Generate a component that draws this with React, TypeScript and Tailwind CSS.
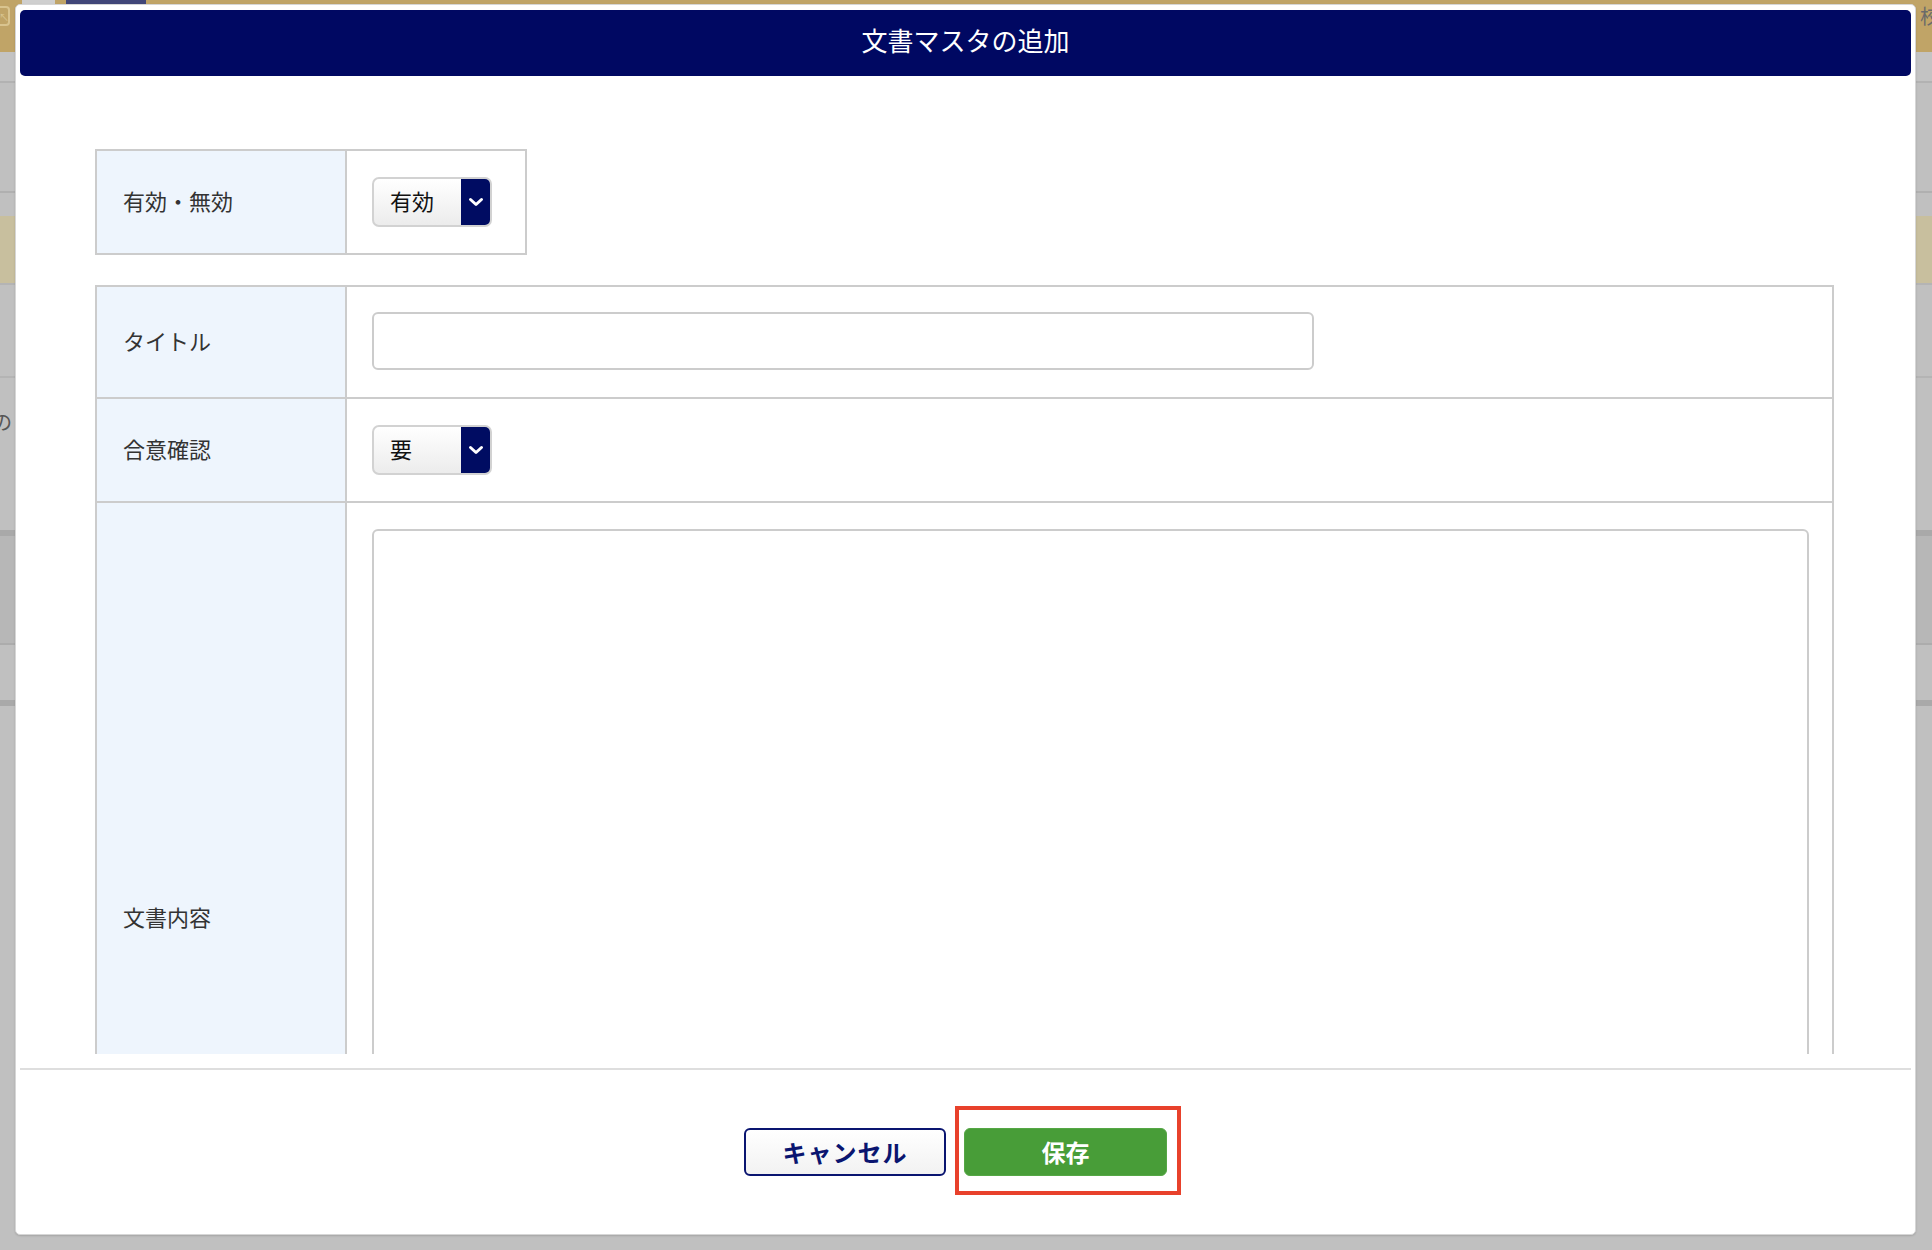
import React from "react";

function Chevron() {
  return (
    <svg width="16" height="10" viewBox="0 0 16 10">
      <path d="M2.5 2.5l5.5 5 5.5-5" fill="none" stroke="white" strokeWidth="3" strokeLinecap="round" strokeLinejoin="round" />
    </svg>
  );
}

function Select({ value }: { value: string }) {
  return (
    <div className="flex h-[50px] w-[120px] overflow-hidden rounded-[7px] border-2 border-[#d2d2d2] bg-linear-to-b from-white to-[#ececec]">
      <span className="flex flex-1 items-center pb-[4px] pl-[16px] text-[22px] text-[#111]">{value}</span>
      <span className="flex w-[29px] items-center justify-center bg-[#000c62]">
        <Chevron />
      </span>
    </div>
  );
}

function Label({ children, tall }: { children: React.ReactNode; tall?: boolean }) {
  return (
    <div
      className={`flex w-[250px] shrink-0 items-center border-r-2 border-[#cccccc] bg-[#eef5fd] pl-[26px] text-[22px] text-[#333] ${
        tall ? "pt-[2px]" : "pb-[4px]"
      }`}
    >
      {children}
    </div>
  );
}

export default function App() {
  return (
    <div className="relative h-[1250px] w-[1932px] overflow-hidden bg-[#c0c0c0] font-['Noto_Sans_CJK_JP','Noto_Sans',sans-serif]">
      {/* dimmed page behind the dialog */}
      <div className="flex h-[52px] items-start justify-between bg-[#c0a467]">
        <div className="flex items-start">
          <div className="mt-[6px] flex h-[20px] w-[10px] items-center justify-center rounded-r-[4px] border-2 border-l-0 border-[#d9c48f] text-[10px] text-[#d9c48f]">↖</div>
          <div className="ml-[12px] h-[4px] w-[33px] bg-[#cfcfcf]" />
          <div className="ml-[11px] h-[4px] w-[80px] bg-[#414678]" />
        </div>
        <span className="mr-[-8px] mt-[6px] text-[20px] leading-none text-[#6a6a6a]">校</span>
      </div>
      <div className="h-[29px] bg-[#c3c3c3]" />
      <div className="h-[2px] bg-[#b2b2b2]" />
      <div className="h-[108px] bg-[#c0c0c0]" />
      <div className="h-[2px] bg-[#b0b0b0]" />
      <div className="h-[23px] bg-[#c0c0c0]" />
      <div className="h-[67px] bg-[#c8bf9e]" />
      <div className="h-[2px] bg-[#b4b4b4]" />
      <div className="h-[91px] bg-[#c0c0c0]" />
      <div className="h-[2px] bg-[#b4b4b4]" />
      <div className="flex h-[152px] items-start justify-between bg-[#c0c0c0]">
        <span className="ml-[-8px] mt-[34px] text-[20px] leading-none text-[#555]">の</span>
      </div>
      <div className="h-[6px] bg-[#a9a9a9]" />
      <div className="h-[107px] bg-[#b7b7b7]" />
      <div className="h-[2px] bg-[#acacac]" />
      <div className="h-[55px] bg-[#c0c0c0]" />
      <div className="h-[6px] bg-[#a9a9a9]" />

      {/* dialog */}
      <div className="absolute left-[15px] top-[4px] flex h-[1231px] w-[1901px] flex-col rounded-[5px] border border-[#d6d6d6] bg-white px-[4px] pt-[5px] shadow-[0_1px_2px_rgba(0,0,0,0.15)]">
        <div className="flex h-[66px] shrink-0 items-center justify-center rounded-[5px] bg-[#000862] pb-[7px] text-[26px] text-white">
          文書マスタの追加
        </div>

        <div className="h-[978px] shrink-0 overflow-hidden pl-[75px] pt-[73px]">
          <div className="flex w-[432px] border-2 border-[#cccccc]">
            <Label>有効・無効</Label>
            <div className="py-[26px] pl-[25px]">
              <Select value="有効" />
            </div>
          </div>

          <div className="mt-[30px] flex w-[1739px] flex-col border-2 border-[#cccccc]">
            <div className="flex">
              <Label>タイトル</Label>
              <div className="flex-1 pb-[27px] pl-[25px] pt-[25px]">
                <div className="h-[58px] w-[942px] rounded-[6px] border-2 border-[#cccccc] bg-white" />
              </div>
            </div>
            <div className="flex border-t-2 border-[#cccccc]">
              <Label>合意確認</Label>
              <div className="flex-1 py-[26px] pl-[25px]">
                <Select value="要" />
              </div>
            </div>
            <div className="flex border-t-2 border-[#cccccc]">
              <Label tall>文書内容</Label>
              <div className="flex-1 pb-[26px] pl-[25px] pr-[23px] pt-[26px]">
                <div className="h-[772px] rounded-[6px] border-2 border-[#cccccc] bg-white" />
              </div>
            </div>
          </div>
        </div>

        <div className="mt-[14px] h-[2px] shrink-0 bg-[#dedede]" />

        <div className="flex justify-center gap-[18px] pr-[20px] pt-[58px]">
          <button className="h-[48px] w-[202px] rounded-[6px] border-2 border-[#0a1570] bg-linear-to-b from-white to-[#f2f2f2] text-[24px] font-bold tracking-[0.04em] text-[#0a1570]">
            キャンセル
          </button>
          <div className="relative">
            <button className="h-[48px] w-[203px] rounded-[6px] border border-[#55a745] bg-[#489d38] text-[24px] font-bold text-white">
              保存
            </button>
            <div className="pointer-events-none absolute -bottom-[19px] -left-[9px] -right-[14px] -top-[22px] border-[4px] border-[#e8412b]" />
          </div>
        </div>
      </div>
    </div>
  );
}
